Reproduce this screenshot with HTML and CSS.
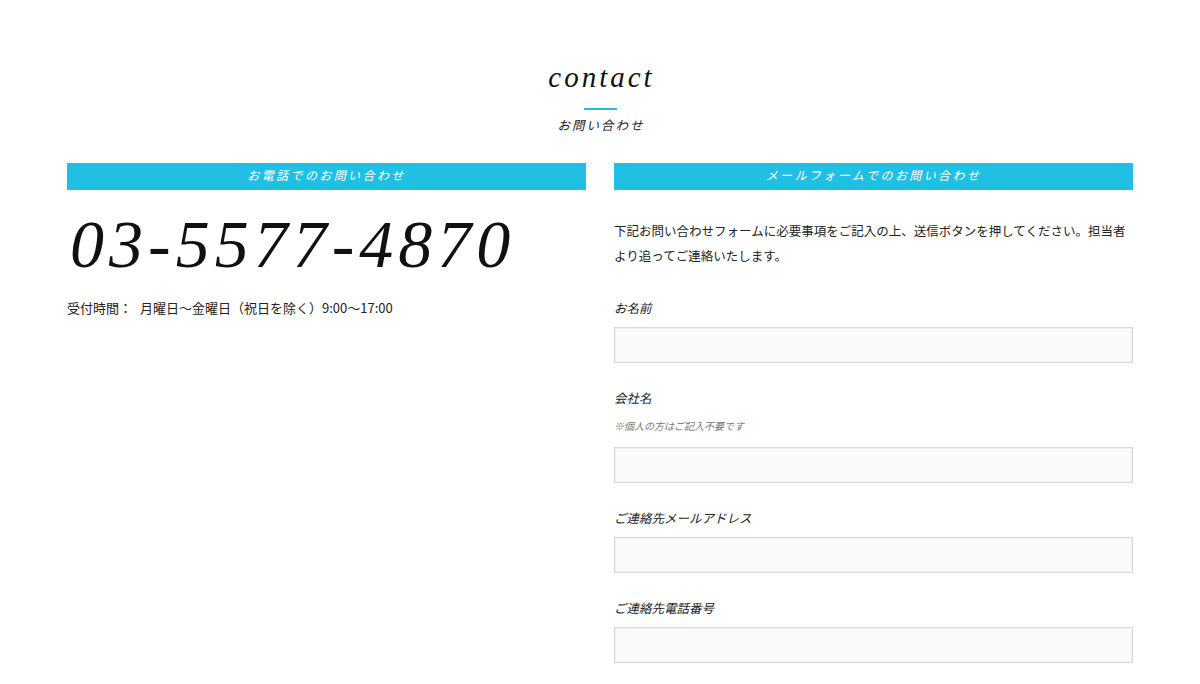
FILE: index.html
```html
<!DOCTYPE html>
<html lang="ja">
<head>
<meta charset="utf-8">
<title>contact</title>
<link rel="stylesheet" href="styles.css">
</head>
<body>
<section class="contact">
  <header class="heading">
    <h1 class="heading-title">contact</h1>
    <span class="heading-rule"></span>
    <p class="heading-sub">お問い合わせ</p>
  </header>
  <div class="columns">
    <div class="col">
      <h2 class="bar">お電話でのお問い合わせ</h2>
      <p class="phone">03-5577-4870</p>
      <p class="hours"><span class="hours-label">受付時間：</span>月曜日〜金曜日（祝日を除く）9:00〜17:00</p>
    </div>
    <div class="col">
      <h2 class="bar">メールフォームでのお問い合わせ</h2>
      <p class="lead">下記お問い合わせフォームに必要事項をご記入の上、送信ボタンを押してください。担当者より追ってご連絡いたします。</p>
      <form class="form">
        <div class="field">
          <label class="label">お名前</label>
          <input class="input" type="text">
        </div>
        <div class="field">
          <label class="label">会社名</label>
          <p class="note">※個人の方はご記入不要です</p>
          <input class="input" type="text">
        </div>
        <div class="field">
          <label class="label">ご連絡先メールアドレス</label>
          <input class="input" type="text">
        </div>
        <div class="field">
          <label class="label">ご連絡先電話番号</label>
          <input class="input" type="text">
        </div>
      </form>
    </div>
  </div>
</section>
</body>
</html>
```
FILE: styles.css
```css
html, body {
  margin: 0;
  padding: 0;
  background: #fff;
}
body {
  font-family: "Noto Sans CJK JP", "Liberation Sans", sans-serif;
  color: #222;
}
.contact {
  width: 1066px;
  margin: 0 auto;
  padding-top: 59px;
}
.heading {
  display: flex;
  flex-direction: column;
  align-items: center;
}
.heading-title {
  margin: 0;
  font-family: "Liberation Serif", "Noto Sans CJK JP", serif;
  font-style: italic;
  font-weight: normal;
  font-size: 29px;
  line-height: 36px;
  letter-spacing: 3px;
  padding-left: 3px;
  color: #111;
}
.heading-rule {
  display: block;
  width: 33px;
  height: 2px;
  background: #21bfe4;
  margin-top: 13px;
}
.heading-sub {
  margin: 7px 0 0;
  font-family: "Liberation Serif", "Noto Sans CJK JP", serif;
  font-style: italic;
  font-weight: 400;
  font-size: 12.5px;
  line-height: 18px;
  letter-spacing: 2px;
  padding-left: 2px;
  color: #222;
}
.columns {
  display: grid;
  grid-template-columns: 1fr 1fr;
  column-gap: 28px;
  margin-top: 28px;
}
.col {
  min-width: 0;
}
.bar {
  margin: 0;
  height: 27px;
  background: #21bfe4;
  color: #fff;
  font-family: "Liberation Serif", "Noto Sans CJK JP", serif;
  font-style: italic;
  font-weight: 400;
  font-size: 12px;
  line-height: 27px;
  letter-spacing: 2.4px;
  text-align: center;
}
.phone {
  margin: 19px 0 0;
  font-family: "Liberation Serif", serif;
  font-style: italic;
  font-size: 68px;
  line-height: 70px;
  letter-spacing: 5px;
  color: #111;
  padding-left: 3px;
}
.hours {
  margin: 19px 0 0;
  font-size: 13px;
  line-height: 20px;
  color: #222;
}
.hours-label {
  margin-right: 8px;
}
.lead {
  margin: 28px 0 0;
  font-size: 12.5px;
  line-height: 25px;
  color: #222;
}
.form {
  margin-top: 31px;
  display: flex;
  flex-direction: column;
  gap: 26px;
}
.field {
  display: flex;
  flex-direction: column;
}
.label {
  font-family: "Liberation Serif", "Noto Sans CJK JP", serif;
  font-style: italic;
  font-weight: 400;
  font-size: 12.5px;
  line-height: 20px;
  color: #222;
  margin-bottom: 8px;
}
.note {
  margin: 2px 0 12px;
  font-family: "Liberation Serif", "Noto Sans CJK JP", serif;
  font-style: italic;
  font-weight: 400;
  font-size: 10px;
  line-height: 16px;
  color: #777;
}
.input {
  display: block;
  box-sizing: border-box;
  width: 100%;
  height: 36px;
  margin: 0;
  border: 1px solid #d8d8d8;
  box-shadow: inset 0 0 0 1px #f0f0f0;
  background: #fafafa;
  border-radius: 0;
  padding: 0 10px;
  outline: none;
}
```
